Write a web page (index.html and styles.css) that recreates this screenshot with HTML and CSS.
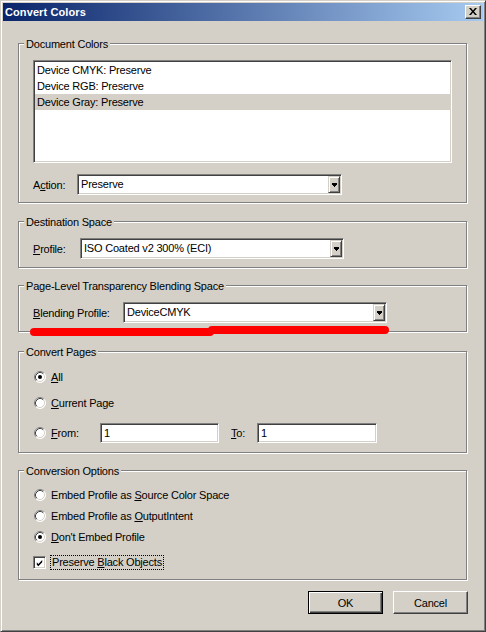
FILE: index.html
```html
<!DOCTYPE html>
<html>
<head>
<meta charset="utf-8">
<title>Convert Colors</title>
<link rel="stylesheet" href="styles.css">
</head>
<body>
<div class="window">
  <div class="titlebar">
    <span class="title">Convert Colors</span>
    <div class="close">
      <svg width="8" height="7" viewBox="0 0 8 7"><path d="M0 0h2l2 2.4 2-2.4h2l-3 3.5 3 3.5h-2l-2-2.4-2 2.4h-2l3-3.5z" fill="#000"/></svg>
    </div>
  </div>
  <div class="content">
    <div class="group g1">
      <span class="legend">Document Colors</span>
      <div class="listbox sunken">
        <div class="item">Device CMYK: Preserve</div>
        <div class="item">Device RGB: Preserve</div>
        <div class="item sel">Device Gray: Preserve</div>
      </div>
      <div class="row">
        <span class="lbl lbl-action">A<u>c</u>tion:</span>
        <div class="combo sunken combo-action">
          <span class="combo-text">Preserve</span>
          <span class="drop"><svg width="5" height="4" viewBox="0 0 5 4"><rect x="0" y="0" width="5" height="2"/><rect x="1" y="2" width="3" height="1"/><rect x="2" y="3" width="1" height="1"/></svg></span>
        </div>
      </div>
    </div>

    <div class="group g2">
      <span class="legend">Destination Space</span>
      <div class="row">
        <span class="lbl lbl-profile"><u>P</u>rofile:</span>
        <div class="combo sunken combo-std">
          <span class="combo-text">ISO Coated v2 300% (ECI)</span>
          <span class="drop"><svg width="5" height="4" viewBox="0 0 5 4"><rect x="0" y="0" width="5" height="2"/><rect x="1" y="2" width="3" height="1"/><rect x="2" y="3" width="1" height="1"/></svg></span>
        </div>
      </div>
    </div>

    <div class="group g3">
      <span class="legend">Page-Level Transparency Blending Space</span>
      <div class="row">
        <span class="lbl lbl-blend"><u>B</u>lending Profile:</span>
        <div class="combo sunken combo-std">
          <span class="combo-text">DeviceCMYK</span>
          <span class="drop"><svg width="5" height="4" viewBox="0 0 5 4"><rect x="0" y="0" width="5" height="2"/><rect x="1" y="2" width="3" height="1"/><rect x="2" y="3" width="1" height="1"/></svg></span>
        </div>
      </div>
      <svg class="redmark" width="370" height="14" viewBox="0 0 370 14">
        <path d="M8 8 L184 8" stroke="#ff0000" stroke-width="8" stroke-linecap="round" fill="none"/>
        <path d="M186 6 L359 6" stroke="#ff0000" stroke-width="8" stroke-linecap="round" fill="none"/>
      </svg>
    </div>

    <div class="group g4">
      <span class="legend">Convert Pages</span>
      <div class="opt opt-a">
        <svg class="radio" width="12" height="12" viewBox="0 0 12 12"><circle cx="6" cy="6" r="5.5" fill="#fff"/><path d="M2.11 9.89A5.5 5.5 0 0 1 9.89 2.11" stroke="#808080" fill="none"/><path d="M9.89 2.11A5.5 5.5 0 0 1 2.11 9.89" stroke="#fff" fill="none"/><path d="M2.82 9.18A4.5 4.5 0 0 1 9.18 2.82" stroke="#404040" fill="none"/><path d="M9.18 2.82A4.5 4.5 0 0 1 2.82 9.18" stroke="#d4d0c8" fill="none"/><circle cx="6" cy="6" r="2" fill="#000"/></svg>
        <span class="opt-lbl"><u>A</u>ll</span>
      </div>
      <div class="opt opt-b">
        <svg class="radio" width="12" height="12" viewBox="0 0 12 12"><circle cx="6" cy="6" r="5.5" fill="#fff"/><path d="M2.11 9.89A5.5 5.5 0 0 1 9.89 2.11" stroke="#808080" fill="none"/><path d="M9.89 2.11A5.5 5.5 0 0 1 2.11 9.89" stroke="#fff" fill="none"/><path d="M2.82 9.18A4.5 4.5 0 0 1 9.18 2.82" stroke="#404040" fill="none"/><path d="M9.18 2.82A4.5 4.5 0 0 1 2.82 9.18" stroke="#d4d0c8" fill="none"/></svg>
        <span class="opt-lbl"><u>C</u>urrent Page</span>
      </div>
      <div class="opt opt-c">
        <svg class="radio" width="12" height="12" viewBox="0 0 12 12"><circle cx="6" cy="6" r="5.5" fill="#fff"/><path d="M2.11 9.89A5.5 5.5 0 0 1 9.89 2.11" stroke="#808080" fill="none"/><path d="M9.89 2.11A5.5 5.5 0 0 1 2.11 9.89" stroke="#fff" fill="none"/><path d="M2.82 9.18A4.5 4.5 0 0 1 9.18 2.82" stroke="#404040" fill="none"/><path d="M9.18 2.82A4.5 4.5 0 0 1 2.82 9.18" stroke="#d4d0c8" fill="none"/></svg>
        <span class="opt-lbl lbl-from"><u>F</u>rom:</span>
        <div class="field sunken field-from">1</div>
        <span class="lbl-to"><u>T</u>o:</span>
        <div class="field sunken field-to">1</div>
      </div>
    </div>

    <div class="group g5">
      <span class="legend">Conversion Options</span>
      <div class="opt opt5">
        <svg class="radio" width="12" height="12" viewBox="0 0 12 12"><circle cx="6" cy="6" r="5.5" fill="#fff"/><path d="M2.11 9.89A5.5 5.5 0 0 1 9.89 2.11" stroke="#808080" fill="none"/><path d="M9.89 2.11A5.5 5.5 0 0 1 2.11 9.89" stroke="#fff" fill="none"/><path d="M2.82 9.18A4.5 4.5 0 0 1 9.18 2.82" stroke="#404040" fill="none"/><path d="M9.18 2.82A4.5 4.5 0 0 1 2.82 9.18" stroke="#d4d0c8" fill="none"/></svg>
        <span class="opt-lbl">Embed Profile as <u>S</u>ource Color Space</span>
      </div>
      <div class="opt opt5 gap3">
        <svg class="radio" width="12" height="12" viewBox="0 0 12 12"><circle cx="6" cy="6" r="5.5" fill="#fff"/><path d="M2.11 9.89A5.5 5.5 0 0 1 9.89 2.11" stroke="#808080" fill="none"/><path d="M9.89 2.11A5.5 5.5 0 0 1 2.11 9.89" stroke="#fff" fill="none"/><path d="M2.82 9.18A4.5 4.5 0 0 1 9.18 2.82" stroke="#404040" fill="none"/><path d="M9.18 2.82A4.5 4.5 0 0 1 2.82 9.18" stroke="#d4d0c8" fill="none"/></svg>
        <span class="opt-lbl">Embed Profile as <u>O</u>utputIntent</span>
      </div>
      <div class="opt opt5 gap3">
        <svg class="radio" width="12" height="12" viewBox="0 0 12 12"><circle cx="6" cy="6" r="5.5" fill="#fff"/><path d="M2.11 9.89A5.5 5.5 0 0 1 9.89 2.11" stroke="#808080" fill="none"/><path d="M9.89 2.11A5.5 5.5 0 0 1 2.11 9.89" stroke="#fff" fill="none"/><path d="M2.82 9.18A4.5 4.5 0 0 1 9.18 2.82" stroke="#404040" fill="none"/><path d="M9.18 2.82A4.5 4.5 0 0 1 2.82 9.18" stroke="#d4d0c8" fill="none"/><circle cx="6" cy="6" r="2" fill="#000"/></svg>
        <span class="opt-lbl"><u>D</u>on't Embed Profile</span>
      </div>
      <div class="opt opt5 gap7">
        <span class="check sunken"><svg width="9" height="9" viewBox="0 0 9 9"><path d="M1 3 L3 5 L8 0 L8 3 L3 8 L1 6 Z" fill="#000"/></svg></span>
        <span class="opt-lbl focus">Preserve <u>B</u>lack Objects</span>
      </div>
    </div>

    <div class="buttons">
      <div class="btn btn-default"><span class="btn-face">OK</span></div>
      <div class="btn"><span class="btn-face">Cancel</span></div>
    </div>
  </div>
</div>
</body>
</html>
```

FILE: styles.css
```css
* { box-sizing: border-box; }

html, body {
  margin: 0;
  padding: 0;
  background: #d4d0c8;
}

body {
  width: 486px;
  height: 632px;
  font-family: "Liberation Sans", Arial, sans-serif;
  font-size: 11px;
  letter-spacing: -0.2px;
  color: #000;
  overflow: hidden;
}

.window {
  width: 486px;
  height: 632px;
  background: #d4d0c8;
  border-top: 1px solid #d4d0c8;
  border-left: 1px solid #d4d0c8;
  border-right: 1px solid #404040;
  border-bottom: 1px solid #404040;
  box-shadow: inset 1px 1px 0 #fff, inset -1px -1px 0 #808080;
  padding: 2px;
  display: flex;
  flex-direction: column;
}

.titlebar {
  height: 18px;
  background: linear-gradient(to right, #0a246a, #a6caf0);
  display: flex;
  align-items: center;
  padding: 0 2px 0 2px;
}

.title {
  color: #fff;
  font-weight: bold;
  font-size: 11px;
  letter-spacing: 0.1px;
  flex: 1;
  line-height: 18px;
}

.close {
  width: 16px;
  height: 14px;
  background: #d4d0c8;
  border-top: 1px solid #fff;
  border-left: 1px solid #fff;
  border-right: 1px solid #404040;
  border-bottom: 1px solid #404040;
  box-shadow: inset -1px -1px 0 #808080;
  display: flex;
  align-items: center;
  justify-content: center;
  padding: 0 1px 1px 0;
}

.close svg { display: block; }

.content {
  padding: 0 15px;
  display: flex;
  flex-direction: column;
}

.group {
  position: relative;
  width: 449px;
  border: 1px solid #808080;
  box-shadow: inset 1px 1px 0 #fff, 1px 1px 0 #fff;
  padding-left: 14px;
}

.legend {
  position: absolute;
  top: -7px;
  left: 5px;
  padding: 0 2px;
  line-height: 14px;
  background: #d4d0c8;
  white-space: nowrap;
}

.g1 { margin-top: 22px; height: 160px; padding-top: 16px; }
.g2 { margin-top: 18px; height: 47px; padding-top: 16px; }
.g3 { margin-top: 17px; height: 47px; padding-top: 16px; }
.g4 { margin-top: 19px; height: 102px; padding-top: 15px; }
.g5 { margin-top: 17px; height: 110px; padding-top: 15px; }

.sunken {
  background: #fff;
  border-top: 1px solid #808080;
  border-left: 1px solid #808080;
  border-right: 1px solid #fff;
  border-bottom: 1px solid #fff;
  box-shadow: inset 1px 1px 0 #404040, inset -1px -1px 0 #d4d0c8;
}

.listbox {
  width: 419px;
  height: 103px;
  padding: 1px;
}

.item {
  height: 16px;
  line-height: 16px;
  padding-left: 2px;
  white-space: nowrap;
}

.item.sel { background: #d4d0c8; }

.row {
  display: flex;
  align-items: center;
}

.g1 .row { margin-top: 11px; }

.lbl { white-space: nowrap; }
.lbl-action { width: 44px; }
.lbl-profile { width: 47px; }
.lbl-blend { width: 90px; }

.combo {
  height: 21px;
  padding: 1px;
  display: flex;
  align-items: stretch;
}

.combo-action { width: 265px; }
.combo-std { width: 264px; }

.combo-text {
  flex: 1;
  padding-left: 2px;
  line-height: 17px;
  white-space: nowrap;
}

.drop {
  width: 12px;
  height: 17px;
  background: #d4d0c8;
  border-top: 1px solid #d4d0c8;
  border-left: 1px solid #d4d0c8;
  border-right: 1px solid #404040;
  border-bottom: 1px solid #404040;
  box-shadow: inset 1px 1px 0 #fff, inset -1px -1px 0 #808080;
  display: flex;
  align-items: center;
  justify-content: center;
}

.drop svg { display: block; fill: #000; }

.redmark {
  position: absolute;
  left: 7px;
  top: 38px;
}

.opt {
  display: flex;
  align-items: center;
  height: 20px;
}

.opt-b { margin-top: 6px; }
.opt-c { margin-top: 10px; }

.radio {
  display: block;
  margin-left: 1px;
  flex: none;
}

.opt-lbl {
  margin-left: 5px;
  white-space: nowrap;
}

.lbl-from { width: 49px; }

.field {
  height: 20px;
  padding: 1px 1px 1px 3px;
  line-height: 16px;
}

.field-from { width: 119px; }
.field-to { width: 120px; }

.lbl-to {
  margin-left: 12px;
  width: 26px;
}

.opt5 { height: 18px; }
.gap3 { margin-top: 3px; }
.gap7 { margin-top: 7px; }

.check {
  width: 13px;
  height: 13px;
  padding: 2px;
  display: flex;
  flex: none;
}

.check svg { display: block; }

.focus {
  margin-left: 4px;
  padding: 0 1px;
  line-height: 13px;
  border: 1px dotted #000;
}

.buttons {
  display: flex;
  justify-content: flex-end;
  gap: 10px;
  margin-top: 11px;
}

.btn {
  width: 75px;
  height: 23px;
  background: #d4d0c8;
  border-top: 1px solid #fff;
  border-left: 1px solid #fff;
  border-right: 1px solid #404040;
  border-bottom: 1px solid #404040;
  box-shadow: inset -1px -1px 0 #808080;
  display: flex;
  align-items: center;
  justify-content: center;
}

.btn-default {
  border: 1px solid #000;
  box-shadow: inset 1px 1px 0 #fff, inset -1px -1px 0 #404040, inset -2px -2px 0 #808080;
}

.btn-face {
  line-height: 14px;
}
```
